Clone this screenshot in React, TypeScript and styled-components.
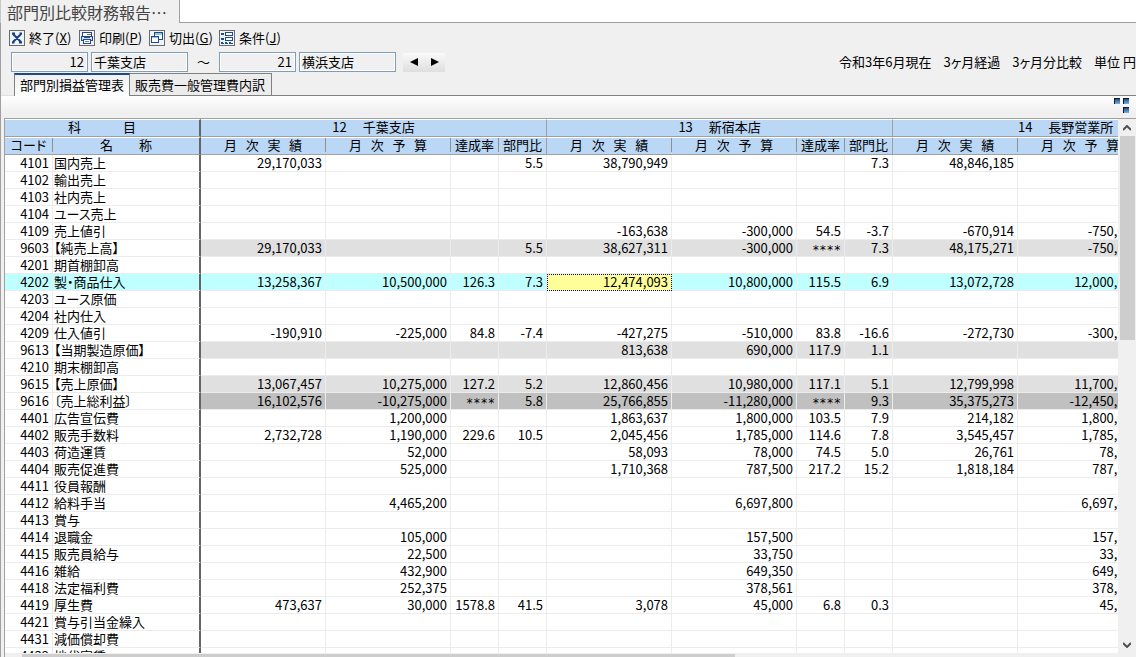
import React from 'react';
import styled, { createGlobalStyle } from 'styled-components';

const Global = createGlobalStyle`
  * { box-sizing: border-box; }
  body {
    margin: 0;
    background: #f0f0f0;
    color: #000;
    font: 13px/17px "Noto Sans CJK JP", sans-serif;
    font-feature-settings: "palt";
  }
  button, input { font: inherit; color: inherit; font-feature-settings: inherit; }
  button { border: 0; padding: 0; background: none; cursor: pointer; }
`;

const Page = styled.div`
  height: 100vh;
  display: flex;
  flex-direction: column;
  overflow: hidden;
`;

const WindowTabs = styled.div`
  display: flex;
  flex: none;
  height: 23px;
  background: #fff;
`;

const WindowTab = styled.div`
  width: 180px;
  padding-left: 6px;
  font-size: 16px;
  line-height: 24px;
  color: #444;
  background: #f0f0f0;
  border-left: 1px solid #c8c8c8;
  border-right: 1px solid #a0a0a0;
  white-space: nowrap;
`;

const WindowTabRest = styled.div`
  flex: 1;
  border-bottom: 1px solid #a0a0a0;
`;

const Body = styled.div`
  flex: 1;
  min-height: 0;
  display: flex;
  flex-direction: column;
  border-left: 1px solid #a0a0a0;
`;

const Toolbar = styled.div`
  display: flex;
  flex: none;
  height: 29px;
  padding: 6px 0 0 8px;
`;

const ToolButton = styled.button`
  display: flex;
  align-items: center;
  gap: 4px;
  width: 70px;
  height: 18px;
  white-space: nowrap;
  svg { flex: none; }
  span { padding-bottom: 2px; }
  u { text-underline-offset: 1px; }
`;

const RangeBar = styled.div`
  display: flex;
  flex: none;
  align-items: center;
  height: 20px;
  padding-left: 10px;
`;

const Field = styled.input<{ $wide?: boolean }>`
  width: ${p => (p.$wide ? 97 : 77)}px;
  height: 20px;
  margin-right: ${p => (p.$wide ? 0 : 3)}px;
  padding: 0 3px 2px 2px;
  text-align: ${p => (p.$wide ? 'left' : 'right')};
  background: #f0f0f0;
  border: 1px solid #7f9db9;
  box-shadow: inset 0 0 0 1px #fff;
  outline: 0;
  border-radius: 0;
`;

const Tilde = styled.span`
  width: 31px;
  text-align: center;
  padding-bottom: 2px;
  font-feature-settings: normal;
`;

const Steps = styled.div`
  display: flex;
  margin-left: 7px;
`;

const Step = styled.button`
  display: grid;
  place-items: center;
  width: 21px;
  height: 19px;
  background: linear-gradient(#fafafa, #dedede);
`;

const Conditions = styled.div`
  display: flex;
  gap: 12px;
  margin-left: auto;
  padding-bottom: 2px;
  white-space: pre;
`;

const TabStrip = styled.div`
  display: flex;
  flex: none;
  align-items: stretch;
  height: 24px;
  padding-top: 1px;
`;

const TabLine = styled.div<{ $lead?: boolean }>`
  flex: ${p => (p.$lead ? '0 0 13px' : 1)};
  border-bottom: 1px solid ${p => (p.$lead ? '#e0e0e0' : '#808080')};
`;

const Tab = styled.button<{ $active?: boolean }>`
  padding: ${p => (p.$active ? '0 5px 2px' : '0 6px 1px 5px')};
  white-space: nowrap;
  background: ${p => (p.$active ? 'linear-gradient(#f0f0f0, #fff)' : '#ececec')};
  border: 1px solid #808080;
  border-top: ${p => (p.$active ? '2px solid #1c4a86' : '1px solid #808080')};
  border-left-width: ${p => (p.$active ? 1 : 0)}px;
  border-bottom: ${p => (p.$active ? 0 : '1px solid #808080')};
`;

const Panel = styled.div`
  display: flex;
  flex: none;
  justify-content: flex-end;
  height: 22px;
  padding: 2px 6px 0 0;
  background: linear-gradient(#fff, #f0f0f0 16px);
`;

const Grid = styled.div`
  flex: 1;
  min-height: 0;
  display: grid;
  grid-template-columns: minmax(0, 1fr) 18px;
  grid-template-rows: minmax(0, 1fr) 4px;
  margin-left: 3px;
  border-top: 1px solid #a0a0a0;
  border-left: 1px solid #a0a0a0;
`;

const Viewport = styled.div`
  overflow: hidden;
  background: #fff;
`;

const Table = styled.table`
  table-layout: fixed;
  width: 1234px;
  border-collapse: separate;
  border-spacing: 0;
`;

const Th = styled.th<{ $edge?: 'group' | 'frozen' }>`
  height: 18px;
  padding: 0 0 2px;
  font-weight: 400;
  line-height: 14px;
  white-space: pre;
  text-align: center;
  background: #bad7f5;
  border-top: 1px solid #fff;
  border-bottom: 1px solid #a0a0a0;
  border-right: ${p =>
    p.$edge === 'frozen' ? '2px solid #646464' : p.$edge === 'group' ? '1px solid #a0a0a0' : 0};
`;

const Split = styled.span<{ $line?: boolean }>`
  display: block;
  height: 14px;
  border-right: ${p => (p.$line ? '1px solid #909090' : 0)};
`;

type Tone = 'plain' | 'sub' | 'total' | 'active';
const tones: Record<Tone, string> = { plain: '#fff', sub: '#e0e0e0', total: '#c0c0c0', active: '#c0ffff' };

const Td = styled.td<{ $tone?: Tone; $frozen?: boolean; $left?: boolean; $focus?: boolean }>`
  height: 17px;
  padding: ${p => (p.$left ? '0 0 0 1px' : p.$focus ? '0 3px 1px 0' : '0 3px 0 0')};
  line-height: ${p => (p.$focus ? 14 : 16)}px;
  white-space: nowrap;
  text-align: ${p => (p.$left ? 'left' : 'right')};
  background: ${p => (p.$focus ? '#ffff99' : tones[p.$tone || 'plain'])};
  border-right: ${p => (p.$frozen ? '2px solid #646464' : '1px solid #ececec')};
  border-bottom: 1px solid #ececec;
  ${p => p.$focus && 'border: 1px dotted #000080;'}
`;

const Stars = styled.span`
  display: block;
  height: 16px;
  font-family: "DejaVu Sans Mono", monospace;
  font-size: 12px;
  line-height: 20px;
`;

const VScroll = styled.div`
  display: flex;
  flex-direction: column;
  align-items: center;
  padding: 0 1px;
  background: #f0f0f0;
`;

const ScrollButton = styled.button`
  display: grid;
  place-items: center;
  width: 16px;
  height: 17px;
`;

const Thumb = styled.div`
  width: 15px;
  height: 204px;
  margin-bottom: auto;
  background: #cdcdcd;
`;

const HScroll = styled.div`
  grid-column: 1 / -1;
  padding: 1px 0 0 17px;
  background: #f0f0f0;
`;

const HThumb = styled.div`
  width: 64%;
  height: 3px;
  background: #cdcdcd;
`;

const IconFrame = ({ children }: { children: React.ReactNode }) => (
  <svg width="16" height="16" viewBox="0 0 16 16" shapeRendering="crispEdges" aria-hidden="true">
    <rect x="0.5" y="0.5" width="15" height="15" fill="#eef3f8" stroke="#6a6a6a" />
    {children}
  </svg>
);

const CloseIcon = () => (
  <IconFrame>
    <path
      d="M4 4L12 12M12 4L4 12M3 3.500h3M10.500 3.500h2.500M3 12.500h2.500M10 12.500h3"
      stroke="#1c3f78"
      strokeWidth="2"
      shapeRendering="auto"
    />
  </IconFrame>
);

const PrintIcon = () => (
  <IconFrame>
    <path d="M3.500 2.500h9v4h-9z" fill="#fff" stroke="#234a86" />
    <path d="M2.500 6.500h11v4h-11z" fill="#cfe2f5" stroke="#234a86" />
    <path d="M4.500 9.500h7v4h-7z" fill="#fff" stroke="#234a86" />
    <path d="M5 7.500h6" stroke="#234a86" />
    <path d="M6 11.500h4" stroke="#5d86bd" />
    <path d="M8 4h2v1H8z" fill="#2fa84f" />
    <path d="M10 4h2v1h-2z" fill="#d04040" />
  </IconFrame>
);

const ExtractIcon = () => (
  <IconFrame>
    <path d="M5.500 2.500h8v7h-8z" fill="#fff" stroke="#234a86" />
    <path d="M6 3h7v2H6z" fill="#8ec4ea" />
    <path d="M2.500 6.500h7v6h-7z" fill="#fff" stroke="#234a86" />
    <path d="M3 7h6v1H3z" fill="#8ec4ea" />
  </IconFrame>
);

const ConditionIcon = () => (
  <IconFrame>
    <path d="M2 3h3v2H2zM2 8h3v2H2z" fill="#234a86" />
    <path d="M6.500 2.500h7v3h-7zM6.500 7.500h7v3h-7z" fill="#fff" stroke="#234a86" />
    <path d="M2 12h2v1h1v1H2zM6 12h2v1h1v1H6zM10 12h2v1h2v1h-4z" fill="#234a86" />
  </IconFrame>
);

const LayoutIcon = () => (
  <svg width="16" height="16" viewBox="0 0 16 16" shapeRendering="crispEdges" aria-hidden="true">
    <defs>
      <linearGradient id="tile" x1="0" y1="0" x2="0" y2="1">
        <stop offset="0" stopColor="#14396a" />
        <stop offset="1" stopColor="#7fb2de" />
      </linearGradient>
    </defs>
    {['0,0', '9,0', '9,9'].map(at => (
      <g key={at} transform={`translate(${at})`}>
        <path d="M0 0h6v6H0z" fill="url(#tile)" />
        <path d="M0.500 6V0.500H6" fill="none" stroke="#0a1c33" />
      </g>
    ))}
  </svg>
);

const Arrow = ({ d }: { d: string }) => (
  <svg width="8" height="8" viewBox="0 0 8 8" aria-hidden="true"><path d={d} /></svg>
);

const Chevron = ({ d }: { d: string }) => (
  <svg width="8" height="6" viewBox="0 0 8 6" fill="none" stroke="#505050" strokeWidth="2" aria-hidden="true">
    <path d={d} />
  </svg>
);

const tools = [
  { icon: <CloseIcon />, label: '終了', key: 'X' },
  { icon: <PrintIcon />, label: '印刷', key: 'P' },
  { icon: <ExtractIcon />, label: '切出', key: 'G' },
  { icon: <ConditionIcon />, label: '条件', key: 'J' },
];

type Row = { code: string; name: string; tone?: Tone; values?: string[] };

// Values run actual, budget, achievement and share for each department in turn.
const rows: Row[] = [
  { code: '4101', name: '国内売上', values: ['29,170,033', '', '', '5.5', '38,790,949', '', '', '7.3', '48,846,185', ''] },
  { code: '4102', name: '輸出売上' },
  { code: '4103', name: '社内売上' },
  { code: '4104', name: 'ユース売上' },
  { code: '4109', name: '売上値引', values: ['', '', '', '', '-163,638', '-300,000', '54.5', '-3.7', '-670,914', '-750,000'] },
  { code: '9603', name: '【純売上高】', tone: 'sub', values: ['29,170,033', '', '', '5.5', '38,627,311', '-300,000', '****', '7.3', '48,175,271', '-750,000'] },
  { code: '4201', name: '期首棚卸高' },
  { code: '4202', name: '製・商品仕入', tone: 'active', values: ['13,258,367', '10,500,000', '126.3', '7.3', '12,474,093', '10,800,000', '115.5', '6.9', '13,072,728', '12,000,000'] },
  { code: '4203', name: 'ユース原価' },
  { code: '4204', name: '社内仕入' },
  { code: '4209', name: '仕入値引', values: ['-190,910', '-225,000', '84.8', '-7.4', '-427,275', '-510,000', '83.8', '-16.6', '-272,730', '-300,000'] },
  { code: '9613', name: '【当期製造原価】', tone: 'sub', values: ['', '', '', '', '813,638', '690,000', '117.9', '1.1', '', ''] },
  { code: '4210', name: '期末棚卸高' },
  { code: '9615', name: '【売上原価】', tone: 'sub', values: ['13,067,457', '10,275,000', '127.2', '5.2', '12,860,456', '10,980,000', '117.1', '5.1', '12,799,998', '11,700,000'] },
  { code: '9616', name: '〔売上総利益〕', tone: 'total', values: ['16,102,576', '-10,275,000', '****', '5.8', '25,766,855', '-11,280,000', '****', '9.3', '35,375,273', '-12,450,000'] },
  { code: '4401', name: '広告宣伝費', values: ['', '1,200,000', '', '', '1,863,637', '1,800,000', '103.5', '7.9', '214,182', '1,800,000'] },
  { code: '4402', name: '販売手数料', values: ['2,732,728', '1,190,000', '229.6', '10.5', '2,045,456', '1,785,000', '114.6', '7.8', '3,545,457', '1,785,000'] },
  { code: '4403', name: '荷造運賃', values: ['', '52,000', '', '', '58,093', '78,000', '74.5', '5.0', '26,761', '78,000'] },
  { code: '4404', name: '販売促進費', values: ['', '525,000', '', '', '1,710,368', '787,500', '217.2', '15.2', '1,818,184', '787,500'] },
  { code: '4411', name: '役員報酬' },
  { code: '4412', name: '給料手当', values: ['', '4,465,200', '', '', '', '6,697,800', '', '', '', '6,697,800'] },
  { code: '4413', name: '賞与' },
  { code: '4414', name: '退職金', values: ['', '105,000', '', '', '', '157,500', '', '', '', '157,500'] },
  { code: '4415', name: '販売員給与', values: ['', '22,500', '', '', '', '33,750', '', '', '', '33,750'] },
  { code: '4416', name: '雑給', values: ['', '432,900', '', '', '', '649,350', '', '', '', '649,350'] },
  { code: '4418', name: '法定福利費', values: ['', '252,375', '', '', '', '378,561', '', '', '', '378,561'] },
  { code: '4419', name: '厚生費', values: ['473,637', '30,000', '1578.8', '41.5', '3,078', '45,000', '6.8', '0.3', '', '45,000'] },
  { code: '4421', name: '賞与引当金繰入' },
  { code: '4431', name: '減価償却費' },
  { code: '4432', name: '地代家賃' },
];

const departments = ['12　 千葉支店', '13　 新宿本店', '14　 長野営業所'];
const measures = ['月   次   実   績', '月   次   予   算', '達成率', '部門比'];
const blank = Array<string>(10).fill('');
const columnWidths = [48, 148, ...departments.flatMap(() => [125, 125, 48, 48])];

export default function App() {
  const headings = departments.flatMap(() => measures).slice(0, 10);
  return (
    <>
      <Global />
      <Page>
        <WindowTabs>
          <WindowTab>部門別比較財務報告…</WindowTab>
          <WindowTabRest />
        </WindowTabs>
        <Body>
          <Toolbar>
            {tools.map(t => (
              <ToolButton key={t.key}>
                {t.icon}
                <span>{t.label}(<u>{t.key}</u>)</span>
              </ToolButton>
            ))}
          </Toolbar>
          <RangeBar>
            <Field aria-label="開始コード" defaultValue="12" />
            <Field aria-label="開始部門" $wide defaultValue="千葉支店" />
            <Tilde>～</Tilde>
            <Field aria-label="終了コード" defaultValue="21" />
            <Field aria-label="終了部門" $wide defaultValue="横浜支店" />
            <Steps>
              <Step aria-label="前へ"><Arrow d="M8 0v8L0 4z" /></Step>
              <Step aria-label="次へ"><Arrow d="M0 0v8l8-4z" /></Step>
            </Steps>
            <Conditions>
              <span>令和3年6月現在</span>
              <span>3ヶ月経過</span>
              <span>3ヶ月分比較</span>
              <span>単位 円</span>
            </Conditions>
          </RangeBar>
          <TabStrip>
            <TabLine $lead />
            <Tab $active>部門別損益管理表</Tab>
            <Tab>販売費一般管理費内訳</Tab>
            <TabLine />
          </TabStrip>
          <Panel><LayoutIcon /></Panel>
          <Grid>
            <Viewport>
              <Table>
                <colgroup>
                  {columnWidths.map((w, i) => <col key={i} width={w} />)}
                </colgroup>
                <thead>
                  <tr>
                    <Th colSpan={2} $edge="frozen">科　　　 目</Th>
                    {departments.map(d => <Th key={d} colSpan={4} $edge="group">{d}</Th>)}
                  </tr>
                  <tr>
                    <Th><Split $line>コード</Split></Th>
                    <Th $edge="frozen">名　　称</Th>
                    {headings.map((h, i) => (
                      <Th key={i} $edge={i % 4 === 3 ? 'group' : undefined}>
                        <Split $line={i % 4 !== 3}>{h}</Split>
                      </Th>
                    ))}
                  </tr>
                </thead>
                <tbody>
                  {rows.map(r => {
                    const labelTone = r.tone === 'active' ? 'active' : 'plain';
                    return (
                      <tr key={r.code}>
                        <Td $tone={labelTone}>{r.code}</Td>
                        <Td $tone={labelTone} $left $frozen>{r.name}</Td>
                        {(r.values || blank).map((v, i) => (
                          <Td key={i} $tone={r.tone} $focus={r.tone === 'active' && i === 4}>
                            {v === '****' ? <Stars>{v}</Stars> : v}
                          </Td>
                        ))}
                      </tr>
                    );
                  })}
                </tbody>
              </Table>
            </Viewport>
            <VScroll>
              <ScrollButton aria-label="上へ"><Chevron d="M0 5l4-4 4 4" /></ScrollButton>
              <Thumb />
              <ScrollButton aria-label="下へ"><Chevron d="M0 1l4 4 4-4" /></ScrollButton>
            </VScroll>
            <HScroll><HThumb /></HScroll>
          </Grid>
        </Body>
      </Page>
    </>
  );
}
